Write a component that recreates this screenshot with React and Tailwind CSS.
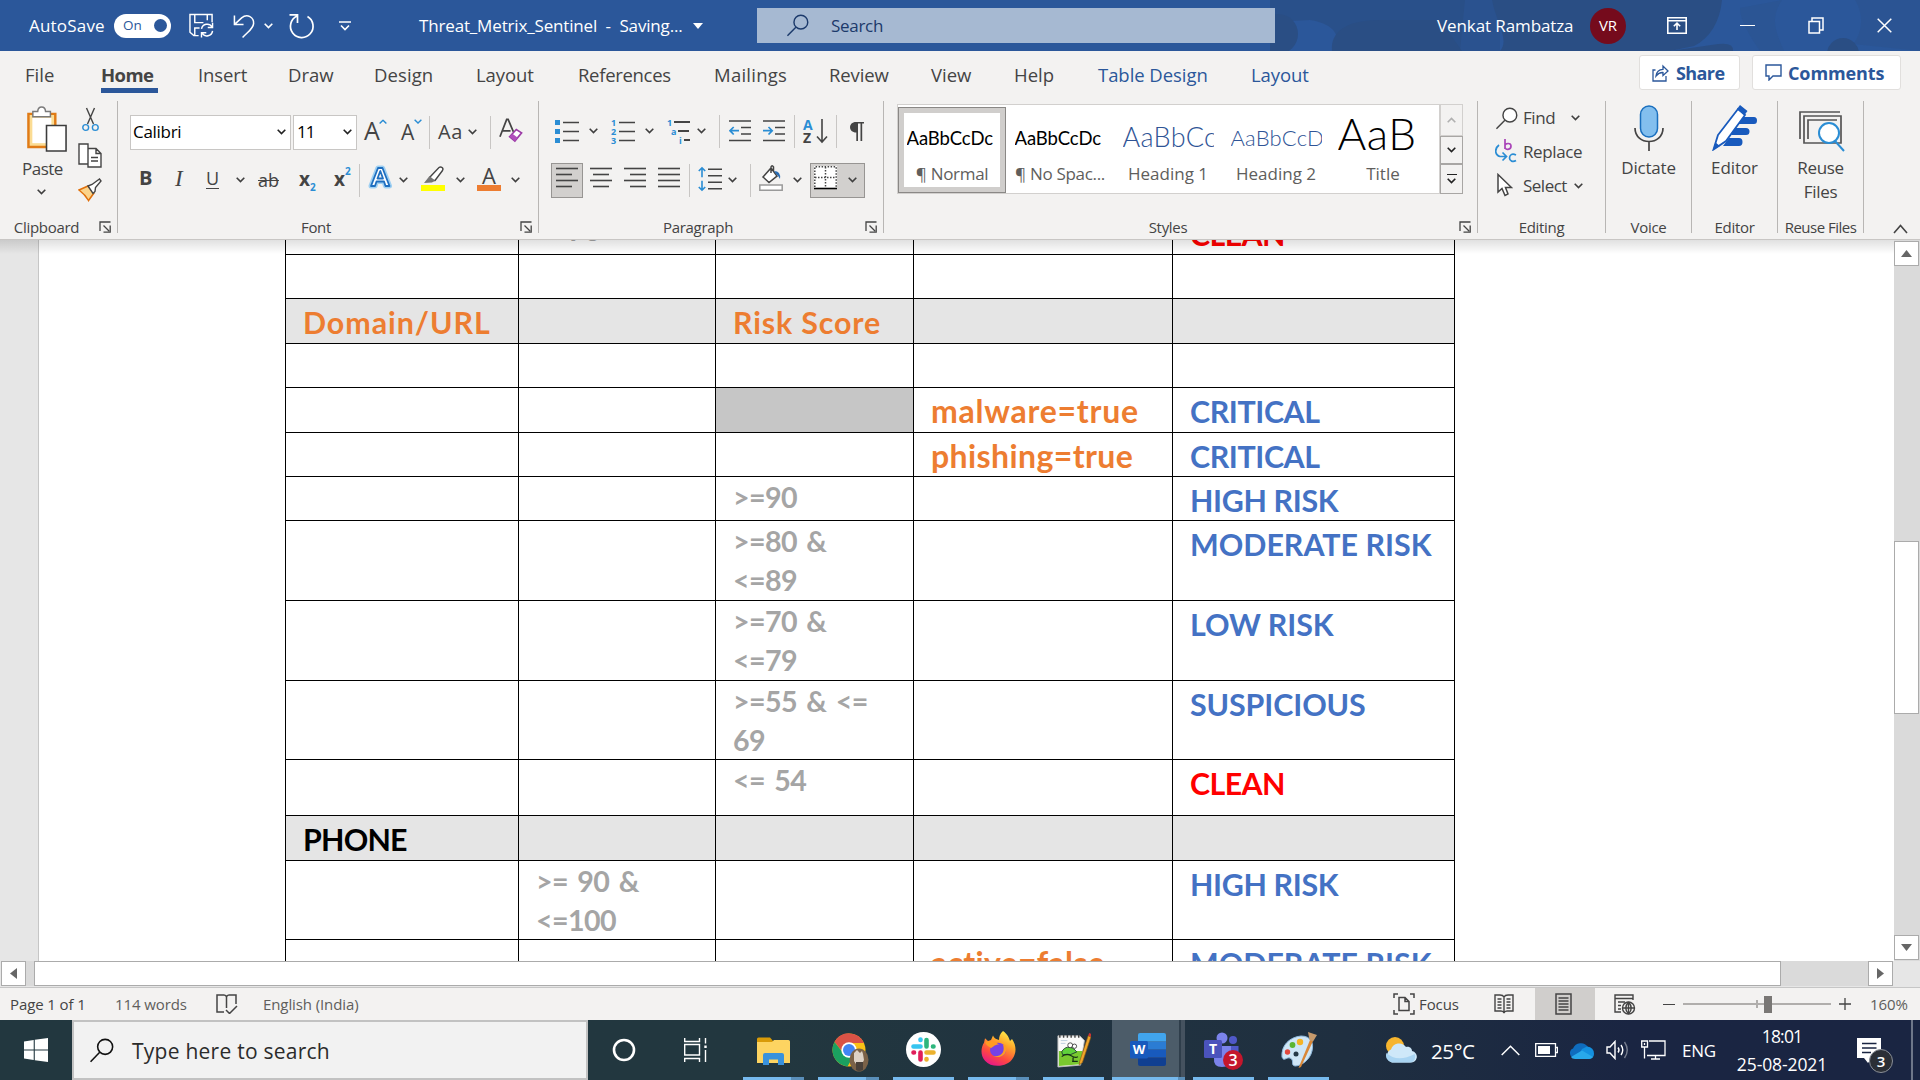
import React from "react";

const Chev = ({ className = "w-[9px]", stroke = "#3f3f3f" }) => (
  <svg viewBox="0 0 9 6" className={`${className} shrink-0`} fill="none" stroke={stroke} strokeWidth="1.6">
    <path d="M0.7 0.8 4.5 4.6 8.3 0.8" />
  </svg>
);

const Launcher = () => (
  <svg width="13" height="13" viewBox="0 0 13 13" fill="none" stroke="#444" strokeWidth="1.3" className="shrink-0">
    <path d="M1 10V1H11.5M4.5 4.5 10 10M11.2 4.5V11.2H4.5" />
  </svg>
);

const Glass = ({ size, stroke, w = 1.5, fill = "none" }) => (
  <svg width={size} height={size} viewBox="0 0 24 24" fill={fill} stroke={stroke} strokeWidth={w} className="shrink-0">
    <circle cx="15.5" cy="8.5" r="7.2" />
    <path d="M10.3 13.7 1.5 22.8" />
  </svg>
);

/* An item on a ribbon row: `pos` carries its left gap and width. */
const It = ({ pos, children }) => <div className={`${pos} flex shrink-0 items-center`}>{children}</div>;
const Bar = ({ pos }) => <div className={`${pos} h-[33px] w-px shrink-0 bg-[#c8c6c4]`} />;

const Group = ({ width, label, launcher, labelClass = "", children }) => (
  <div className={`${width} flex shrink-0`}>
    <div className="flex h-[140px] min-w-0 flex-1 flex-col">
      <div className="h-[119px]">{children}</div>
      <div className="flex h-5 items-center">
        <div className={`flex-1 text-center text-[15px] leading-5 tracking-[-0.3px] whitespace-nowrap ${labelClass}`}>{label}</div>
        {launcher && <div className="mr-[5px]"><Launcher /></div>}
      </div>
    </div>
    <div className="mt-[3px] h-[132px] w-px bg-[#b8b6b4]" />
  </div>
);

function TitleBar() {
  return (
    <div className="relative flex h-[51px] items-center overflow-hidden bg-[#2b579a] text-[17px] text-white">
      <svg className="absolute top-0 left-[1270px]" width="650" height="51" viewBox="0 0 650 51" fill="#2a4e84">
        <path d="M0 0H195L190 51H64C72 38 66 24 40 20L0 22Z" opacity=".75" />
        <circle cx="8" cy="34" r="20" />
        <path d="M62 51C60 32 76 20 110 20H170L192 51Z" />
        <path d="M190 0H230V51H190Z" opacity=".5" />
        <path d="M222 0H452C450 22 440 38 424 46L400 51H230C240 40 226 22 222 0Z" />
        <path d="M400 51 448 44Q464 42 463 51Z" />
        <path d="M512 0C500 18 505 30 514 51H490C480 36 470 20 470 8Z" opacity=".25" />
        <path d="M585 0C596 18 590 36 583 44L650 51V0Z" opacity=".3" />
        <circle cx="573" cy="54" r="16" />
      </svg>
      <div className="relative flex w-full items-center">
        <span className="ml-[29px] w-[85px] tracking-[0.2px]">AutoSave</span>
        <div className="flex h-6 w-[57px] items-center rounded-full bg-white pl-[9px] text-[13.5px] text-[#2b579a]">
          On<span className="ml-[12px] h-[13px] w-[13px] rounded-full bg-[#2b579a]" />
        </div>
        <svg className="ml-[18px]" width="25" height="26" viewBox="0 0 26 26" fill="none" stroke="#fff" strokeWidth="1.5">
          <path d="M10 23H5L1 19.5V1H24V9M6 1V9.5H15M19 1V7M6 23V15H11" />
          <path d="M13 16A6 6 0 0 1 24 14M24.5 9.5V14.5H19.5M24.5 18A6 6 0 0 1 13.5 20.5M13 25V20H18" />
        </svg>
        <svg className="ml-[19px]" width="23" height="26" viewBox="0 0 24 26" fill="none" stroke="#fff" strokeWidth="1.6">
          <path d="M1.5 2V11.5H11M2 11 9 4.5C15-.5 22 4 21.5 10.5 21 16 16 18.5 10 25" />
        </svg>
        <Chev className="ml-[8px] w-[9px]" stroke="#fff" />
        <svg className="ml-[15px]" width="27" height="26" viewBox="0 0 27 26" fill="none" stroke="#fff" strokeWidth="1.7">
          <path d="M19.5 3.5A11.3 11.3 0 1 1 9 3M1.5 1.8H9.5V10" />
        </svg>
        <svg className="ml-[24px]" width="12" height="10" viewBox="0 0 12 10" fill="none" stroke="#fff" strokeWidth="1.6">
          <path d="M0 1H12M2 4.5 6 8.5 10 4.5" />
        </svg>
        <span className="ml-[68px] w-[274px] whitespace-pre tracking-[-0.16px]">Threat_Metrix_Sentinel  -  Saving...</span>
        <svg width="10" height="6" viewBox="0 0 10 6" fill="#fff"><path d="M0 0H10L5 6Z" /></svg>
        <div className="ml-[54px] flex h-[35px] w-[518px] items-center bg-[#a6b9d2] pl-[29px] text-[#1c3a6b]">
          <Glass size={23} stroke="#1c3a6b" w={1.5} />
          <span className="ml-[22px] tracking-[-0.3px]">Search</span>
        </div>
        <span className="ml-[162px] w-[153px] tracking-[-0.1px]">Venkat Rambatza</span>
        <div className="flex h-9 w-9 items-center justify-center rounded-full bg-[#750b1c] text-[15px]">VR</div>
        <svg className="ml-[41px]" width="20" height="17" viewBox="0 0 20 17" fill="none" stroke="#fff" strokeWidth="1.6">
          <path d="M.8.8H19.2V16.2H.8ZM1 3.8H19M10 13V6.5M6.8 9.3 10 6.2 13.2 9.3" />
        </svg>
        <div className="ml-[53px] h-[1.5px] w-[15px] bg-white" />
        <svg className="ml-[53px]" width="16" height="17" viewBox="0 0 16 17" fill="none" stroke="#fff" strokeWidth="1.5">
          <path d="M1 4.5H11.5V16H1ZM4 4V1H15V13H12" />
        </svg>
        <svg className="ml-[53px]" width="15" height="15" viewBox="0 0 15 15" fill="none" stroke="#fff" strokeWidth="1.5">
          <path d="M.7.7 14.3 14.3M14.3.7.7 14.3" />
        </svg>
      </div>
    </div>
  );
}

const TABS = [
  ["File", "w-[76px]", "text-[#444]"],
  ["Home", "w-[97px] font-bold tracking-[-0.6px]", "text-[#444]"],
  ["Insert", "w-[90px] tracking-[-0.1px]", "text-[#444]"],
  ["Draw", "w-[86px]", "text-[#444]"],
  ["Design", "w-[102px] tracking-[0.1px]", "text-[#444]"],
  ["Layout", "w-[102px] tracking-[-0.1px]", "text-[#444]"],
  ["References", "w-[136px] tracking-[-0.3px]", "text-[#444]"],
  ["Mailings", "w-[115px] tracking-[0.25px]", "text-[#444]"],
  ["Review", "w-[102px] tracking-[-0.1px]", "text-[#444]"],
  ["View", "w-[83px]", "text-[#444]"],
  ["Help", "w-[84px]", "text-[#444]"],
  ["Table Design", "w-[153px] tracking-[-0.05px]", "text-[#2b579a]"],
  ["Layout", "w-[388px] tracking-[-0.1px]", "text-[#2b579a]"],
];

function Tabs() {
  return (
    <div className="flex h-[47px] items-start pl-[25px] text-[18.5px]">
      {TABS.map(([t, cls, color], i) => (
        <div key={i} className={`${cls} ${color} shrink-0 pt-[11px] leading-[26px] whitespace-nowrap`}>
          {t}
          {t === "Home" && <div className="h-[5px] w-[57px] bg-[#2b579a]" />}
        </div>
      ))}
      <div className="mt-1 flex h-[35px] w-[101px] items-center rounded-[3px] border border-[#e1dfdd] bg-white pl-[12px] font-bold text-[#2b579a]">
        <svg width="17" height="18" viewBox="0 0 17 18" fill="none" stroke="#2b579a" strokeWidth="1.3">
          <path d="M3.5 6H1V17H14V12M4 12C4.500 7.500 7 5.500 11 5.300V2L16 7 11 11.500V8.500C8 8.300 6 9.500 4 12Z" />
        </svg>
        <span className="ml-[7px] pt-[2px] text-[18px] tracking-[-0.6px]">Share</span>
      </div>
      <div className="mt-1 ml-[12px] flex h-[35px] w-[149px] items-center rounded-[3px] border border-[#e1dfdd] bg-white pl-[12px] font-bold text-[#2b579a]">
        <svg width="17" height="17" viewBox="0 0 17 17" fill="none" stroke="#2b579a" strokeWidth="1.4">
          <path d="M1 1H16V12H8L4 16V12H1Z" />
        </svg>
        <span className="ml-[6px] pt-[2px] text-[18px] tracking-[-0.1px]">Comments</span>
      </div>
    </div>
  );
}

function Clipboard() {
  return (
    <Group width="w-[118px]" label="Clipboard" launcher labelClass="pr-[6px]">
      <div className="flex pt-[8px] pl-[22px] text-[17px]">
        <div className="w-[41px]">
          <svg className="ml-[4px]" width="42" height="47" viewBox="0 0 43 48" fill="none">
            <path d="M2.500 8H30V42H2.500Z" fill="#fbdc93" stroke="#e07b16" strokeWidth="2.500" />
            <path d="M6.500 12H26V38H6.500Z" fill="#fff" />
            <path d="M7 11V5.500H12C12.500-.5 19.500-.5 20 5.500H25V11Z" fill="#fff" stroke="#7a7a7a" strokeWidth="1.500" />
            <path d="M21 20H41V46H21Z" fill="#fff" stroke="#3c3c3c" strokeWidth="1.600" />
          </svg>
          <div className="mt-[4px] leading-6 tracking-[-0.5px]">Paste</div>
          <Chev className="mt-[8px] ml-[15px] w-[9px]" />
        </div>
        <div className="ml-[15px] flex w-6 flex-col items-center">
          <svg className="mt-[1px]" width="17" height="25" viewBox="0 0 17 25" fill="none" strokeWidth="1.400">
            <path d="M4.500 1 11.500 17M12.500 1 5.500 17" stroke="#444" />
            <circle cx="3.700" cy="20.500" r="2.900" stroke="#2a8dd4" /><circle cx="13.300" cy="20.500" r="2.900" stroke="#2a8dd4" />
          </svg>
          <svg className="mt-[11px]" width="24" height="25" viewBox="0 0 24 25" fill="#fff" stroke="#444" strokeWidth="1.400">
            <path d="M1 1H10V21H1ZM10 5.500H18L23 10.500V24H10ZM18 5.500V10.500H23M13 14.500H20M13 18H20" />
          </svg>
          <svg className="mt-[10px]" width="24" height="24" viewBox="0 0 24 24">
            <path d="M1 12 10 8 16 15 10.500 22.500C8 18 5 15 1 12Z" fill="#fbd38a" stroke="#e0700b" strokeWidth="1.500" />
            <path d="M10 8 14 6.500 21.500 1 23 3 17.500 9.500 17 13.500 15 15.500Z" fill="#fff" stroke="#444" strokeWidth="1.400" />
          </svg>
        </div>
      </div>
    </Group>
  );
}

function Font() {
  return (
    <Group width="w-[421px]" label="Font" launcher labelClass="pr-[6px]">
      <div className="mt-4 flex h-9 items-center pl-[12px] text-[17px]">
        <div className="flex h-[35px] w-[161px] items-center justify-between border border-[#c8c6c4] bg-white pr-1 pl-[2px] text-black tracking-[-0.3px]">
          Calibri<Chev stroke="#222" />
        </div>
        <div className="ml-[2px] flex h-[35px] w-[64px] items-center justify-between border border-[#c8c6c4] bg-white pr-1 pl-[3px] text-black tracking-[-1px]">
          11<Chev stroke="#222" />
        </div>
        <It pos="ml-[7px] w-[37px]">
          <span className="-mt-1 text-[25px] leading-none">A</span>
          <Chev className="-mt-5 -ml-px w-[8px] rotate-180" stroke="#2a8dd4" />
        </It>
        <It pos="w-[28px]">
          <span className="text-[21px] leading-none">A</span>
          <Chev className="-mt-5 w-[8px]" stroke="#2a8dd4" />
        </It>
        <Bar pos="" />
        <It pos="ml-[8px] w-[52px]">
          <span className="w-[30px] text-[20px] leading-none tracking-[0.5px]">Aa</span><Chev />
        </It>
        <Bar pos="" />
        <svg className="ml-[8px] -mt-1" width="25" height="26" viewBox="0 0 26 26" fill="none">
          <path d="M1 20 8 2H9.500L15 15M3.500 14H12" stroke="#444" strokeWidth="1.800" />
          <path d="M11 20 18 12.500 23.500 16 16.500 24.500Z" fill="#fff" stroke="#9b3aa6" strokeWidth="1.700" />
          <path d="M11 20 14 17 19.500 21 16.500 24.500Z" fill="#b04ebc" />
        </svg>
      </div>
      <div className="mt-[12px] flex h-9 items-center pl-[21px] text-[20px] leading-none">
        <It pos="w-[36px]"><b className="-mt-[4px]">B</b></It>
        <It pos="w-[31px]"><i className="-mt-[4px] font-['Liberation_Serif'] text-[23px]">I</i></It>
        <It pos="w-[30px]"><span className="-mt-[2px] border-b-[1.5px] border-[#444] text-[18px] leading-[19px]">U</span></It>
        <It pos="w-[22px]"><Chev /></It>
        <It pos="w-[41px]"><span className="text-[18px] line-through">ab</span></It>
        <It pos="w-[35px]"><b className="-mt-[2px] text-[19px]">x</b><b className="mt-[14px] text-[10px] text-[#2a8dd4]">2</b></It>
        <It pos="w-[25px]"><b className="-mt-[2px] text-[19px]">x</b><b className="-mt-[18px] text-[10px] text-[#2a8dd4]">2</b></It>
        <Bar pos="" />
        <It pos="ml-[8px] w-[31px]">
          <svg className="-mt-[6px]" width="25" height="24" viewBox="0 0 25 24" strokeLinejoin="round">
            <path d="M3 21 10 3H14.500L21.500 21H17.500L16 16.500H8.500L7 21Z" fill="none" stroke="#9fd0f2" strokeWidth="5" />
            <path fillRule="evenodd" d="M3 21 10 3H14.500L21.500 21H17.500L16 16.500H8.500L7 21ZM9.500 13.500H15L12.300 6Z" fill="#fff" stroke="#1f6fc0" strokeWidth="1.800" />
          </svg>
        </It>
        <It pos="w-[22px]"><Chev /></It>
        <It pos="w-[35px]">
          <svg className="-mt-[4px]" width="25" height="26" viewBox="0 0 25 26">
            <path d="M9 12 18 2.500C20 1 23 3 21.500 5.500L14 15.500H10Z" fill="#fff" stroke="#444" strokeWidth="1.400" />
            <path d="M8.500 11 14 15.500 11 17.500 3 18Z" fill="#777" />
            <path d="M0 20H24V26H0Z" fill="#ff0" />
          </svg>
        </It>
        <It pos="w-[21px]"><Chev /></It>
        <It pos="w-[34px]">
          <div className="-mt-[4px] flex w-6 flex-col items-center"><span className="text-[22px] leading-[20px]">A</span><span className="h-[6px] w-6 bg-[#ed7d31]" /></div>
        </It>
        <Chev />
      </div>
    </Group>
  );
}

const Lines = ({ rows }) => (
  <svg width="23" height="22" viewBox="0 0 23 22" stroke="#444" strokeWidth="1.600" className="-mt-[4px] shrink-0">
    {rows.map(([a, b], i) => <path key={i} d={`M${a} ${1.500 + i * 6}H${b}`} />)}
  </svg>
);

const Indent = ({ flip }) => (
  <svg width="22" height="22" viewBox="0 0 22 22" fill="none" strokeWidth="1.700">
    <path d="M0 1H22M12 7.500H22M12 14H22M0 20.500H22" stroke="#444" />
    <path d={flip ? "M0 10.700H9M5.500 7 9.200 10.700 5.500 14.500" : "M10 10.700H1M4.700 7 1 10.700 4.700 14.500"} stroke="#2a8dd4" />
  </svg>
);

function Paragraph() {
  return (
    <Group width="w-[345px]" label="Paragraph" launcher labelClass="pr-[8px]">
      <div className="mt-[15px] flex h-9 items-center pl-[16px]">
        <It pos="w-[34px]">
          <svg width="24" height="23" viewBox="0 0 24 23">
            <path d="M0 0H5V5H0ZM0 9H5V14H0ZM0 18H5V23H0Z" fill="#2a8dd4" />
            <path d="M8 2.500H24M8 11.500H24M8 20.500H24" stroke="#444" strokeWidth="1.600" />
          </svg>
        </It>
        <It pos="w-[22px]"><Chev /></It>
        <It pos="w-[34px]">
          <div className="flex w-[7px] flex-col text-[9px] leading-[9px] font-bold text-[#2a8dd4]"><span>1</span><span>2</span><span>3</span></div>
          <svg width="17" height="23" viewBox="0 0 17 23" stroke="#444" strokeWidth="1.600"><path d="M1 2.500H17M1 11.500H17M1 20.500H17" /></svg>
        </It>
        <It pos="w-[22px]"><Chev /></It>
        <It pos="w-[30px]">
          <div className="flex w-6 flex-col text-[9px] leading-[9px] font-bold text-[#2a8dd4]">
            <div className="flex items-center">1<span className="ml-[2px] h-[1.5px] w-4 bg-[#444]" /></div>
            <div className="flex items-center pl-1">a<span className="ml-[2px] h-[1.5px] w-[11px] bg-[#444]" /></div>
            <div className="flex items-center pl-[12px]">i<span className="ml-[2px] h-[1.5px] w-[6px] bg-[#444]" /></div>
          </div>
        </It>
        <It pos="w-[22px]"><Chev /></It>
        <Bar pos="" />
        <It pos="ml-[9px] w-[34px]"><Indent /></It>
        <It pos="w-[31px]"><Indent flip /></It>
        <Bar pos="" />
        <It pos="ml-[8px] w-[33px]">
          <div className="flex w-[12px] flex-col text-[14px] leading-[13px] font-bold"><span className="text-[#2a8dd4]">A</span><span>Z</span></div>
          <svg className="ml-[1px]" width="12" height="26" viewBox="0 0 12 26" fill="none" stroke="#444" strokeWidth="1.600"><path d="M6 1V24M1 18.500 6 24 11 18.500" /></svg>
        </It>
        <Bar pos="" />
        <svg className="ml-[13px]" width="14" height="19" viewBox="0 0 14 19"><path d="M14 0V1.600H12.200V19H10.500V1.600H8V19H6.300V10.500C-2 10.500-2 0 6 0Z" fill="#444" /></svg>
      </div>
      <div className="mt-[13px] flex h-9 items-center pl-[12px]">
        <div className="flex h-[35px] w-8 items-center justify-center border border-[#979593] bg-[#d2d0ce]"><Lines rows={[[0, 22], [0, 16], [0, 22], [0, 16]]} /></div>
        <It pos="ml-[7px] w-[34px]"><Lines rows={[[0, 22], [3, 19], [0, 22], [3, 19]]} /></It>
        <It pos="w-[34px]"><Lines rows={[[0, 22], [6, 22], [0, 22], [6, 22]]} /></It>
        <It pos="w-[31px]"><Lines rows={[[0, 22], [0, 22], [0, 22], [0, 22]]} /></It>
        <Bar pos="" />
        <It pos="ml-[8px] w-[30px]">
          <svg className="-mt-[2px]" width="24" height="26" viewBox="0 0 24 28" preserveAspectRatio="none" fill="none" strokeWidth="1.600">
            <path d="M4 2V12M.8 5.500 4 2 7.200 5.500M4 16V26M.8 22.500 4 26 7.200 22.500" stroke="#2a8dd4" />
            <path d="M10 3.500H24M10 10.500H24M10 17.500H24M10 24.500H24" stroke="#444" />
          </svg>
        </It>
        <It pos="w-[22px]"><Chev /></It>
        <Bar pos="" />
        <It pos="ml-[8px] w-[34px]">
          <svg className="-mt-[4px]" width="24" height="26" viewBox="0 0 24 26" fill="none" strokeWidth="1.500">
            <path d="M4 12 12 3 18 11 10 17.500ZM12 8V2Q13-.5 14.500 2V6" stroke="#444" fill="#fff" />
            <path d="M15 6Q22 6 21 14 19 10 17 9" fill="#2a6db4" />
            <path d="M.8 20H23.200V25.200H.8Z" fill="#fff" stroke="#9a9a9a" />
          </svg>
        </It>
        <It pos="w-[17px]"><Chev /></It>
        <div className="flex h-[35px] w-[55px] items-center border border-[#979593] bg-[#d2d0ce] pl-[3px]">
          <svg className="-mt-[4px]" width="23" height="24" viewBox="0 0 23 24" fill="none">
            <path d="M0 0H23V22H0Z" fill="#fff" />
            <path d="M.8 21V.8H22.200V21M11.500 1V21M1 11.500H22" stroke="#444" strokeWidth="1.500" strokeDasharray="1.500 1.500" />
            <path d="M0 22.500H23" stroke="#000" strokeWidth="1.600" />
          </svg>
          <Chev className="ml-[11px] w-[9px]" />
        </div>
      </div>
    </Group>
  );
}

const Style = ({ w, sample, label, labelClass = "" }) => (
  <div className={`${w} flex shrink-0 flex-col items-center`}>
    <div className="flex h-[56px] w-[91px] items-end overflow-hidden whitespace-nowrap">{sample}</div>
    <div className={`mt-[1px] text-[17px] leading-6 whitespace-nowrap text-[#605e5c] ${labelClass}`}>{label}</div>
  </div>
);

function Styles() {
  return (
    <Group width="w-[594px]" label="Styles" launcher labelClass="pr-[7px]">
      <div className="pt-[6px] pl-[13px]">
        <div className="flex h-[90px] w-[566px]">
          <div className="flex w-[543px] border border-[#d2d0ce] bg-white">
            <div className="mt-[2px] flex h-[86px] w-[108px] shrink-0 border border-[#8a8886] bg-[#d0cecc] p-[5px]">
              <div className="flex w-full justify-center bg-white">
                <Style w="w-[96px] -mt-[8px]" sample={<span className="font-['Lato'] text-[18.5px] leading-[46px] tracking-[-0.1px] text-black">AaBbCcDc</span>} label="¶ Normal" labelClass="tracking-[-0.3px]" />
              </div>
            </div>
            <Style w="w-[108px]" sample={<span className="font-['Lato'] text-[18.5px] leading-[46px] tracking-[-0.1px] text-black">AaBbCcDc</span>} label="¶ No Spac..." labelClass="tracking-[-0.3px]" />
            <Style w="w-[108px]" sample={<span className="font-['Lato'] text-[27px] leading-[49px] font-light tracking-[0.3px] text-[#2f5496]">AaBbCc</span>} label="Heading 1" />
            <Style w="w-[108px]" sample={<span className="font-['Lato'] text-[22px] leading-[47px] font-light tracking-[0.2px] text-[#2f5496]">AaBbCcD</span>} label="Heading 2" />
            <Style w="w-[106px]" sample={<span className="font-['Lato'] text-[44px] leading-[56px] font-light tracking-[0.5px] text-black">AaB</span>} label="Title" />
          </div>
          <div className="flex w-[23px] flex-col">
            <div className="flex h-8 items-center justify-center border border-[#d2d0ce]"><Chev className="w-[9px] rotate-180" stroke="#b0b0b0" /></div>
            <div className="flex h-[29px] items-center justify-center border border-[#a8a6a4]"><Chev stroke="#222" /></div>
            <div className="flex h-[30px] flex-col items-center justify-center gap-[3px] border border-[#a8a6a4]"><span className="h-[1.5px] w-[10px] bg-[#222]" /><Chev stroke="#222" /></div>
          </div>
        </div>
      </div>
    </Group>
  );
}

function Editing() {
  return (
    <Group width="w-[128px]" label="Editing">
      <div className="flex flex-col pt-[3px] pl-[17px] text-[17px] tracking-[-0.4px]">
        <div className="flex h-[34px] items-center">
          <div className="w-[28px]"><Glass size={23} stroke="#444" fill="#fff" /></div>
          <span className="w-[48px]">Find</span><Chev />
        </div>
        <div className="flex h-[34px] items-center">
          <div className="w-[28px]">
            <svg className="-mt-[3px]" width="23" height="25" viewBox="0 0 23 25" fill="none" strokeWidth="1.700">
              <path d="M10 1V11M10 7.500C10 5.500 16 4 16 8S10 12.500 10 9" stroke="#a944b8" />
              <path d="M21 17C17 15 14.500 17 14.500 20S18 24.500 21 22.500M4 7C-1 11 0 17 5 18.500H11M7.500 14.500 11.500 18.500 7.500 22.500" stroke="#2a8dd4" />
            </svg>
          </div>
          <span>Replace</span>
        </div>
        <div className="flex h-[34px] items-center">
          <div className="w-[28px]">
            <svg className="-mt-[3px] ml-[2px]" width="16" height="24" viewBox="0 0 16 24" fill="#fff" stroke="#444" strokeWidth="1.500"><path d="M1 1.500V19L5 15.500 8 22.500 11 21 8.500 14.500H14.500Z" /></svg>
          </div>
          <span className="w-[51px] tracking-[-0.5px]">Select</span><Chev />
        </div>
      </div>
    </Group>
  );
}

function BigButtons() {
  return (
    <>
      <Group width="w-[86px]" label="Voice">
        <div className="flex flex-col items-center pt-[7px] text-[17px]">
          <svg width="30" height="46" viewBox="0 0 30 46" fill="none">
            <rect x="6.500" y="1" width="17" height="31" rx="8.500" fill="#83bfee" stroke="#1a6fbe" strokeWidth="1.500" />
            <path d="M1 23C1 41 29 41 29 23M15 36.500V46" stroke="#444" strokeWidth="1.700" />
          </svg>
          <div className="mt-[5px] leading-6 tracking-[-0.2px]">Dictate</div>
        </div>
      </Group>
      <Group width="w-[86px]" label="Editor">
        <div className="flex flex-col items-center pt-[6px] text-[17px]">
          <svg width="46" height="47" viewBox="0 0 46 47">
            <path d="M27 13H42Q45 13 45 16.500T42 20H23ZM23 24H34Q37.500 24 37.500 27.500T34 31H19ZM17 34H27Q30.500 34 30.500 38T27 42H11Z" fill="#185abd" />
            <path d="M6 31 26 5 33 11 14 37 1.500 45.500Z" fill="#fff" stroke="#185abd" strokeWidth="1.800" />
            <path d="M25 5 28 1 35.500 7 32.500 11ZM1 46 3.500 38.500 8 42Z" fill="#185abd" />
          </svg>
          <div className="mt-[5px] leading-6 tracking-[-0.1px]">Editor</div>
        </div>
      </Group>
      <Group width="w-[86px]" label="Reuse Files" labelClass="tracking-[-0.5px]">
        <div className="flex flex-col items-center pt-[13px] text-[17px]">
          <svg className="ml-[3px]" width="46" height="41" viewBox="0 0 46 41" fill="none">
            <path d="M1 28V1H41M5 31V5H42V32H5ZM9 28V9H38" stroke="#555" strokeWidth="1.700" />
            <circle cx="30" cy="22" r="10" fill="#fff" stroke="#2a8dd4" strokeWidth="2" />
            <path d="M36 30 45 40" stroke="#2a8dd4" strokeWidth="2" />
          </svg>
          <div className="mt-[4px] leading-6 tracking-[-0.3px]">Reuse</div>
          <div className="leading-6 tracking-[-0.3px]">Files</div>
        </div>
      </Group>
    </>
  );
}

function Ribbon() {
  return (
    <div className="flex h-[142px] border-b border-[#c8c6c4]">
      <Clipboard /><Font /><Paragraph /><Styles /><Editing /><BigButtons />
      <svg className="mt-[126px] ml-[29px]" width="15" height="10" viewBox="0 0 15 10" fill="none" stroke="#444" strokeWidth="1.600"><path d="M1 9 7.500 1.500 14 9" /></svg>
    </div>
  );
}

const BLUE = "text-[#4472c4]";
const ORANGE = "text-[#ed7d31]";
const ROWS = [
  { h: "h-[44px]" },
  { h: "h-[45px]", shade: true, 0: ["Domain/URL", ORANGE + " tracking-[0.95px]"], 2: ["Risk Score", ORANGE + " tracking-[0.85px]"] },
  { h: "h-[44px]" },
  { h: "h-[45px]", pick: 2, 3: ["malware=true", ORANGE + " text-[32px] tracking-[0.75px]"], 4: ["CRITICAL", BLUE + " tracking-[-0.4px]"] },
  { h: "h-[44px]", 3: ["phishing=true", ORANGE + " text-[32px] tracking-[0.4px]"], 4: ["CRITICAL", BLUE + " tracking-[-0.4px]"] },
  { h: "h-[44px]", 2: [">=90"], 4: ["HIGH RISK", BLUE + " tracking-[-0.35px]"] },
  { h: "h-[80px]", 2: [">=80 &\n<=89"], 4: ["MODERATE RISK", BLUE] },
  { h: "h-[80px]", 2: [">=70 &\n<=79"], 4: ["LOW RISK", BLUE + " tracking-[-0.1px]"] },
  { h: "h-[79px]", 2: [">=55 & <=\n69"], 4: ["SUSPICIOUS", BLUE + " tracking-[-0.1px]"] },
  { h: "h-[56px]", 2: ["<= 54"], 4: ["CLEAN", "text-[#f00] tracking-[-0.6px]"] },
  { h: "h-[45px]", shade: true, 0: ["PHONE", "text-black tracking-[-0.8px]"] },
  { h: "h-[79px]", 1: [">= 90 &\n<=100"], 4: ["HIGH RISK", BLUE + " tracking-[-0.35px]"] },
  { h: "h-[60px]", 3: ["active=false", ORANGE + " text-[32px] tracking-[0.3px]"], 4: ["MODERATE RISK", BLUE] },
];
const COLS = ["w-[233px]", "w-[197px]", "w-[198px]", "w-[259px]", "w-[282px]"];

function Table() {
  return (
    <div className="ml-[246px] w-[1170px] font-['Lato'] font-bold">
      <div className="flex h-[14px] border-r border-black">
        {COLS.map((w, i) => (
          <div key={i} className={`${w} relative h-full shrink-0 border-l border-black`}>
            {i === 1 && <span className="absolute bottom-[4px] left-[17px] text-[28.600px] leading-[39px] tracking-[-0.5px] text-[#a5a5a5]">&lt;=70</span>}
            {i === 4 && <span className="absolute -bottom-px left-[17px] text-[30.400px] leading-[42px] tracking-[-0.6px] text-[#f00]">CLEAN</span>}
          </div>
        ))}
      </div>
      {ROWS.map((r, ri) => (
        <div key={ri} className={`${r.h} flex border-t border-r border-black`}>
          {COLS.map((w, i) => {
            const cell = r[i];
            const bg = r.shade ? "bg-[#e5e5e5]" : r.pick === i ? "bg-[#c6c6c6]" : "";
            return (
              <div key={i} className={`${w} h-full shrink-0 border-l border-black`}>
                <div className={`${bg} h-full pl-[17px] whitespace-pre`}>
                  {cell && (cell[1]
                    ? <div className={`pt-[2px] text-[30.400px] leading-[42px] ${cell[1]}`}>{cell[0]}</div>
                    : <div className="pt-[1px] text-[28.600px] leading-[39px] tracking-[-0.6px] text-[#a5a5a5] [word-spacing:3px]">{cell[0]}</div>)}
                </div>
              </div>
            );
          })}
        </div>
      ))}
    </div>
  );
}

function Document() {
  return (
    <div className="flex h-[721px]">
      <div className="relative flex h-full w-[1894px] overflow-hidden bg-[#e6e6e6]">
        <div className="w-[39px] shrink-0 border-r border-[#c6c6c6]" />
        <div className="flex-1 bg-white"><Table /></div>
        <div className="absolute inset-x-0 top-0 h-[14px] bg-gradient-to-b from-black/12 to-transparent" />
      </div>
      <div className="flex w-[26px] flex-col bg-[#dadada] pt-[1px]">
        <div className="flex h-[25px] w-[25px] items-center justify-center border border-[#ababab] bg-white">
          <svg width="11" height="7" viewBox="0 0 11 7"><path d="M0 7 5.500 0 11 7Z" fill="#666" /></svg>
        </div>
        <div className="mt-[275px] h-[173px] w-[25px] border border-[#ababab] bg-white" />
        <div className="mt-[221px] flex h-[25px] w-[25px] items-center justify-center border border-[#ababab] bg-white">
          <svg width="11" height="7" viewBox="0 0 11 7"><path d="M0 0H11L5.500 7Z" fill="#666" /></svg>
        </div>
      </div>
    </div>
  );
}

function HScroll() {
  return (
    <div className="flex h-[26px] bg-[#e6e6e6]">
      <div className="ml-px flex h-[25px] w-[25px] items-center justify-center border border-[#ababab] bg-white">
        <svg width="7" height="11" viewBox="0 0 7 11"><path d="M7 0V11L0 5.500Z" fill="#666" /></svg>
      </div>
      <div className="h-[25px] w-2 bg-[#dadada]" />
      <div className="h-[25px] w-[1747px] border border-[#ababab] bg-white" />
      <div className="h-[25px] w-[87px] bg-[#dadada]" />
      <div className="flex h-[25px] w-[25px] items-center justify-center border border-[#ababab] bg-white">
        <svg width="7" height="11" viewBox="0 0 7 11"><path d="M0 0V11L7 5.500Z" fill="#666" /></svg>
      </div>
    </div>
  );
}

function StatusBar() {
  return (
    <div className="flex h-[33px] items-center border-t border-[#c6c6c6] pl-[10px] text-[15px] tracking-[-0.1px] text-[#444]">
      <span className="w-[105px]">Page 1 of 1</span>
      <span className="w-[101px] text-[#605e5c]">114 words</span>
      <svg width="22" height="20" viewBox="0 0 22 20" fill="none" stroke="#444" strokeWidth="1.500">
        <path d="M8 18H1V1H8Q10 1 10.500 3 11 1 13 1H20V10M10.500 3V14M10 16 13.500 19.500 21 12" />
      </svg>
      <span className="ml-[25px] w-[1130px] text-[#605e5c]">English (India)</span>
      <svg width="22" height="22" viewBox="0 0 22 22" fill="none" stroke="#444" strokeWidth="1.500">
        <path d="M5 1H1V5M17 1H21V5M5 21H1V17M17 21H21V17M6 4.500H12L16 8.500V17.500H6ZM12 4.500V8.500H16" />
      </svg>
      <span className="ml-[4px] w-[75px]">Focus</span>
      <svg width="20" height="20" viewBox="0 0 20 20" fill="none" stroke="#444" strokeWidth="1.400">
        <path d="M10 3Q9 1 6 1H1V17H7Q9.500 17 10 19 10.500 17 13 17H19V1H14Q11 1 10 3V18M3.500 5H7.500M3.500 8H7.500M3.500 11H7.500M3.500 14H7.500M12.500 5H16.500M12.500 8H16.500M12.500 11H16.500M12.500 14H16.500" />
      </svg>
      <div className="ml-[21px] flex h-8 w-[60px] items-center bg-[#d0cecc] pl-[20px]">
        <svg width="17" height="22" viewBox="0 0 17 22" fill="none" stroke="#444" strokeWidth="1.500">
          <path d="M1 1H16V21H1ZM3.500 5H13.500M3.500 8H13.500M3.500 11H13.500M3.500 14H13.500M3.500 17H13.500" />
        </svg>
      </div>
      <svg className="ml-[19px]" width="22" height="21" viewBox="0 0 22 21" fill="none" stroke="#444" strokeWidth="1.400">
        <path d="M7 18H1V1H19V6M1 4.500H19M4 8H11M4 11.500H7M4 15H7" />
        <circle cx="14.500" cy="14" r="6" fill="#f3f2f1" />
        <path d="M8.500 14H20.500M14.500 8V20M14.500 8Q9 14 14.500 20M14.500 8Q20 14 14.500 20" />
      </svg>
      <div className="ml-[27px] h-[1px] w-3 bg-[#444]" />
      <div className="ml-[8px] flex w-[148px] items-center">
        <span className="h-[2px] w-[73px] bg-[#b0aeac]" />
        <span className="h-2 w-[2px] bg-[#b0aeac]" />
        <span className="h-[2px] w-[6px] bg-[#b0aeac]" />
        <span className="h-[17px] w-2 bg-[#797775]" />
        <span className="h-[2px] flex-1 bg-[#b0aeac]" />
      </div>
      <svg className="ml-[8px]" width="12" height="12" viewBox="0 0 12 12" stroke="#444" strokeWidth="1.300"><path d="M0 6H12M6 0V12" /></svg>
      <span className="ml-[19px] text-[#605e5c]">160%</span>
    </div>
  );
}

const AppBtn = ({ pos, split, children }) => (
  <div className={`${pos} flex h-[60px] w-[61px] shrink-0 flex-col`}>
    <div className="flex h-[57px] items-center justify-center pt-[2px]">{children}</div>
    <div className="flex h-[3px] bg-[#76b9ed]">{split && <span className="ml-auto h-[3px] w-[13px] bg-[#5a8fba]" />}</div>
  </div>
);

function Taskbar() {
  return (
    <div className="flex h-[60px] items-center bg-linear-to-r from-[#22373f] from-40% via-[#1f2f40] via-70% to-[#1a2542] to-85% text-white">
      <svg className="ml-6" width="24" height="24" viewBox="0 0 24 24" fill="#fff"><path d="M0 3.400 9.700 2V11.400H0ZM10.800 1.800 24 0V11.400H10.800ZM0 12.500H9.700V22L0 20.600ZM10.800 12.500H24V24L10.800 22.200Z" /></svg>
      <div className="ml-6 flex h-[60px] w-[516px] items-center border-2 border-[#c2c2c2] bg-[#f2f2f2] pl-[15px] text-[21px] text-[#2b2b2b]">
        <Glass size={25} stroke="#111" w={1.500} />
        <span className="ml-[18px] pt-[4px] tracking-[0.250px]">Type here to search</span>
      </div>
      <svg className="ml-6" width="24" height="24" viewBox="0 0 24 24" fill="none" stroke="#fff" strokeWidth="2.600"><circle cx="12" cy="12" r="10" /></svg>
      <svg className="ml-[48px]" width="24" height="24" viewBox="0 0 24 24" fill="none" stroke="#fff" strokeWidth="1.400">
        <path d="M.7 0V3.500H15.500V0M.7 6.500H15.500V17H.7ZM.7 24V20.500H15.500V24M21.500 0V5.500M21.500 12V24" /><path d="M20.300 7.500H22.700V10H20.300Z" fill="#fff" stroke="none" />
      </svg>
      <AppBtn pos="ml-[35px]" split>
        <svg className="ml-[-1px] mb-[-2px]" width="33" height="28" viewBox="0 0 33 28">
          <path d="M0 2Q0 .5 1.500.5H13L16 4V8H0Z" fill="#d99b08" /><path d="M0 5H15L17 3H31.500Q33 3 33 4.500V26H0Z" fill="#fdd461" />
          <path d="M6 28V18Q6 16 8 16H25Q27 16 27 18V28H21V22.500H12V28Z" fill="#3a92dc" />
        </svg>
      </AppBtn>
      <AppBtn pos="ml-[14px]" split>
        <svg className="ml-[4px] mt-[4px]" width="38" height="40" viewBox="0 0 38 40">
          <circle cx="17" cy="18" r="16.500" fill="#fbc116" />
          <path d="M2.500 10A16.500 16.500 0 0 1 32 11H17L11.500 21Z" fill="#da5246" />
          <path d="M2.500 10A16.500 16.500 0 0 0 15.500 34.400L21.500 24 12 22Z" fill="#1ba160" />
          <circle cx="17" cy="18" r="7.700" fill="#fff" /><circle cx="17" cy="18" r="6" fill="#4285f4" />
          <ellipse cx="27" cy="28" rx="9.500" ry="11.500" fill="#7b6248" />
          <path d="M22 21 25 18 28 21 30 19 31 22 32 28 30 32 24 32 22 29Z" fill="#ddd2c6" /><path d="M24 30H31V38Q27 40 24 38Z" fill="#4a413a" />
        </svg>
      </AppBtn>
      <AppBtn pos="ml-[14px]">
        <svg width="35" height="35" viewBox="0 0 35 35">
          <circle cx="17.500" cy="17.500" r="17.500" fill="#fff" />
          <g strokeWidth="4.600" strokeLinecap="round">
            <path d="M7.500 14.500H14.500M14.500 7.500V8" stroke="#36c5f0" /><path d="M20.500 8V14.500M27 14.500H27.500" stroke="#2eb67d" />
            <path d="M20.500 20.500H27.500M20.500 27V27.500" stroke="#ecb22e" /><path d="M14.500 20.500V27.500M7.500 20.500H8" stroke="#e01e5a" />
          </g>
        </svg>
      </AppBtn>
      <AppBtn pos="ml-[14px]" split>
        <svg className="-mt-[2px]" width="35" height="36" viewBox="0 0 35 40" preserveAspectRatio="none">
          <defs>
            <linearGradient id="flame" x1=".8" y1="0" x2=".3" y2="1"><stop offset="0" stopColor="#fff44f" /><stop offset=".35" stopColor="#ffa62a" /><stop offset=".7" stopColor="#ff4a3f" /><stop offset="1" stopColor="#e6178a" /></linearGradient>
          </defs>
          <path d="M22 0C27 4 28 8 29 11L31 9C36 17 35 25 32 30 27 40 11 42 4 33-1 27 0 18 3 13L4 8 7 11 10 10 12 5C13 8 15 9 18 10 18 6 19 3 22 0Z" fill="url(#flame)" />
          <circle cx="17" cy="21" r="8" fill="#7542e5" />
          <path d="M4 12C10 10 14 12 18 15 14 15 13 17 10 19 7 17 5 16 4 12ZM25 16C27 26 20 31 12 28 22 29 24 22 22 15Z" fill="#ff9b22" />
        </svg>
      </AppBtn>
      <AppBtn pos="ml-[14px]">
        <svg width="34" height="36" viewBox="0 0 36 38">
          <path d="M1 4H24L29 9 25 35 1 37Z" fill="#fafafa" stroke="#bbb" /><path d="M2 20H27L25 34 2 36Z" fill="#79c92f" />
          <path d="M3 3V6M7 3V6M11 3V6M15 3V6M19 3V6M23 3V6" stroke="#444" strokeWidth="1.500" />
          <path d="M4 9H11M4 12H9" stroke="#bcd" />
          <path d="M5 21C8 15 14 15 18 18L21 21 14 24H6Z" fill="#5fd13c" stroke="#243" strokeWidth="1" />
          <circle cx="14" cy="14" r="2.600" fill="#fff" stroke="#222" strokeWidth=".8" /><circle cx="18.500" cy="15" r="2.300" fill="#fff" stroke="#222" strokeWidth=".8" />
          <path d="M5 26Q10 22 15 25T22 26M16 31H22M17 27V31" fill="none" stroke="#163016" strokeWidth="1.300" />
          <path d="M24 31 33 4 36 5 27 32 23.500 35Z" fill="#f0a52b" stroke="#8a5a12" strokeWidth=".7" /><path d="M33 4 34 1 36.500 2 36 5Z" fill="#c33" />
        </svg>
      </AppBtn>
      <div className="ml-[8px] flex h-[60px] w-[73px] shrink-0 flex-col">
        <div className="flex h-[57px]">
          <div className="flex w-[67px] items-center bg-[#4c5c69] pt-[2px] pl-[18px]">
            <div className="relative h-[33px] w-9">
              <svg width="36" height="33" viewBox="0 0 36 33">
                <path d="M8 2Q8 0 10 0H34Q36 0 36 2V8.500H8Z" fill="#41a5ee" /><path d="M8 8.500H36V16.500H8Z" fill="#2b7cd3" />
                <path d="M8 16.500H36V24.500H8Z" fill="#185abd" /><path d="M8 24.500H36V31Q36 33 34 33H10Q8 33 8 31Z" fill="#103f91" />
                <rect y="8" width="18" height="17.500" rx="1.500" fill="#185abd" />
              </svg>
              <span className="absolute top-[8px] left-0 w-[18px] text-center text-[13px] leading-[17px] font-bold">W</span>
            </div>
          </div>
          <div className="w-[6px] bg-[#2f3e4b]"><div className="ml-[2px] h-full bg-[#45525f]" /></div>
        </div>
        <div className="flex h-[3px] bg-[#76b9ed]"><span className="ml-auto h-[3px] w-[7px] bg-[#5a8fba]" /></div>
      </div>
      <AppBtn pos="ml-[8px]">
        <div className="relative mt-[2px] h-[38px] w-[39px]">
          <svg width="39" height="38" viewBox="0 0 39 38">
            <circle cx="29" cy="8" r="4" fill="#5059c9" /><circle cx="18" cy="6" r="5.500" fill="#7b83eb" />
            <path d="M24 14H34.500V22Q34 28 28 28H24Z" fill="#5059c9" /><path d="M10 14H27V26Q27 35 18 35T10 26Z" fill="#7b83eb" />
            <rect y="8" width="18" height="18" rx="1.500" fill="#4b53bc" /><circle cx="29" cy="28" r="10" fill="#c4162c" />
          </svg>
          <span className="absolute top-[8px] left-0 w-[18px] text-center text-[14px] leading-[18px] font-bold">T</span>
          <span className="absolute top-[18px] left-[19px] w-5 text-center text-[16px] leading-5 font-semibold">3</span>
        </div>
      </AppBtn>
      <AppBtn pos="ml-[14px]">
        <svg width="36" height="38" viewBox="0 0 36 38">
          <path d="M1 26C0 14 9 6 20 5 30 5 33 12 31 20 29 29 20 35 14 35 9 34 14 29 9 27 5 26 3 31 1 26Z" fill="#cfe6f7" stroke="#8fb9dc" />
          <circle cx="6.500" cy="21" r="2.700" fill="#e2483d" /><circle cx="11.500" cy="14" r="2.900" fill="#5cb531" /><circle cx="19" cy="11" r="3.200" fill="#f5b326" /><circle cx="15" cy="23" r="2.500" fill="#263a48" />
          <path d="M17.500 37 29 9 32 10 20 36Z" fill="#d98738" /><path d="M27 1 36 4 32 10.500 28.500 9Z" fill="#c69a6c" />
        </svg>
      </AppBtn>
      <svg className="ml-[56px] -mt-px" width="32" height="26" viewBox="0 0 32 26">
        <circle cx="10" cy="9" r="9" fill="#f7b52e" />
        <path d="M7 25.500A7 7 0 0 1 6 12.500 8.500 8.500 0 0 1 21 10C25 9 27 12 27 14A5.800 5.800 0 0 1 25 25.500Z" fill="#cfe8f9" /><path d="M7 25.500A7 7 0 0 1 1.500 16Q12 26 30 17 31 25 25 25.500Z" fill="#a9d4f2" />
      </svg>
      <span className="ml-[14px] w-[70px] pt-[3px] text-[20.500px] tracking-[-0.400px]">25°C</span>
      <svg width="19" height="11" viewBox="0 0 19 11" fill="none" stroke="#fff" strokeWidth="1.500"><path d="M.7 10 9.500 1.300 18.300 10" /></svg>
      <svg className="ml-[15px]" width="23" height="14" viewBox="0 0 23 14"><path d="M.7.7H20.500V13.300H.7ZM21 4.500H22.500V9.500H21" fill="none" stroke="#fff" strokeWidth="1.300" /><path d="M3 3H15V11H3Z" fill="#fff" /></svg>
      <svg className="ml-[11px]" width="25" height="17" viewBox="0 0 25 17">
        <path d="M5 16A5 5 0 0 1 4 6.500 8.500 8.500 0 0 1 19 5L21 13Z" fill="#0f6cbd" /><path d="M13 7 18 4.500Q25 5 25 12A5 5 0 0 1 20 17L11 11Z" fill="#1490df" /><path d="M2 15 13 8.500 24 15Q22.500 17 20 17H6Q3 17 2 15Z" fill="#28a8ea" />
      </svg>
      <svg className="ml-[12px]" width="23" height="20" viewBox="0 0 23 20" fill="none" stroke="#fff" strokeWidth="1.400">
        <path d="M1 7H4L9 1.500V18.500L4 13H1Z" /><path d="M12 7.500Q14 10 12 12.500M15 5Q18.500 10 15 15" /><path d="M18.500 2Q24 10 18.500 18" opacity=".4" />
      </svg>
      <svg className="ml-[12px]" width="25" height="20" viewBox="0 0 25 20" fill="none" stroke="#fff" strokeWidth="1.300">
        <path d="M8 1H24V15.500H6M14.500 16V19M10 19H19M.7 1H6.500V7H.7ZM3.500 7V18.500M3.500 3V5" />
      </svg>
      <span className="ml-[16px] w-[52px] pt-[1px] text-[17px] tracking-[-0.300px]">ENG</span>
      <div className="flex w-[96px] flex-col items-center text-[17.500px] leading-[28px] tracking-[-0.100px]">
        <span className="tracking-[-0.800px]">18:01</span><span>25-08-2021</span>
      </div>
      <div className="relative ml-[27px] h-[40px] w-[36px]">
        <svg width="25" height="27" viewBox="0 0 25 27" className="mt-[8px]"><path d="M0 0H24V20H15L11 25 7 20H0Z" fill="#fff" /><path d="M5 5.500H19.500M5 10H19.500M5 14.500H14" stroke="#1a2542" strokeWidth="1.400" /></svg>
        <div className="absolute top-[19px] left-[12px] flex h-6 w-6 items-center justify-center rounded-full border border-[#8a8f98] bg-[#2b2f36] text-[15px] font-semibold">3</div>
      </div>
      <div className="ml-[18px] h-[60px] w-[2px] bg-[#6e7789]" />
    </div>
  );
}

export default function App() {
  return (
    <div className="flex h-[1080px] w-[1920px] flex-col overflow-hidden bg-[#f3f2f1] font-['Open_Sans',sans-serif] text-[#444]">
      <TitleBar />
      <Tabs />
      <Ribbon />
      <Document />
      <HScroll />
      <StatusBar />
      <Taskbar />
    </div>
  );
}
